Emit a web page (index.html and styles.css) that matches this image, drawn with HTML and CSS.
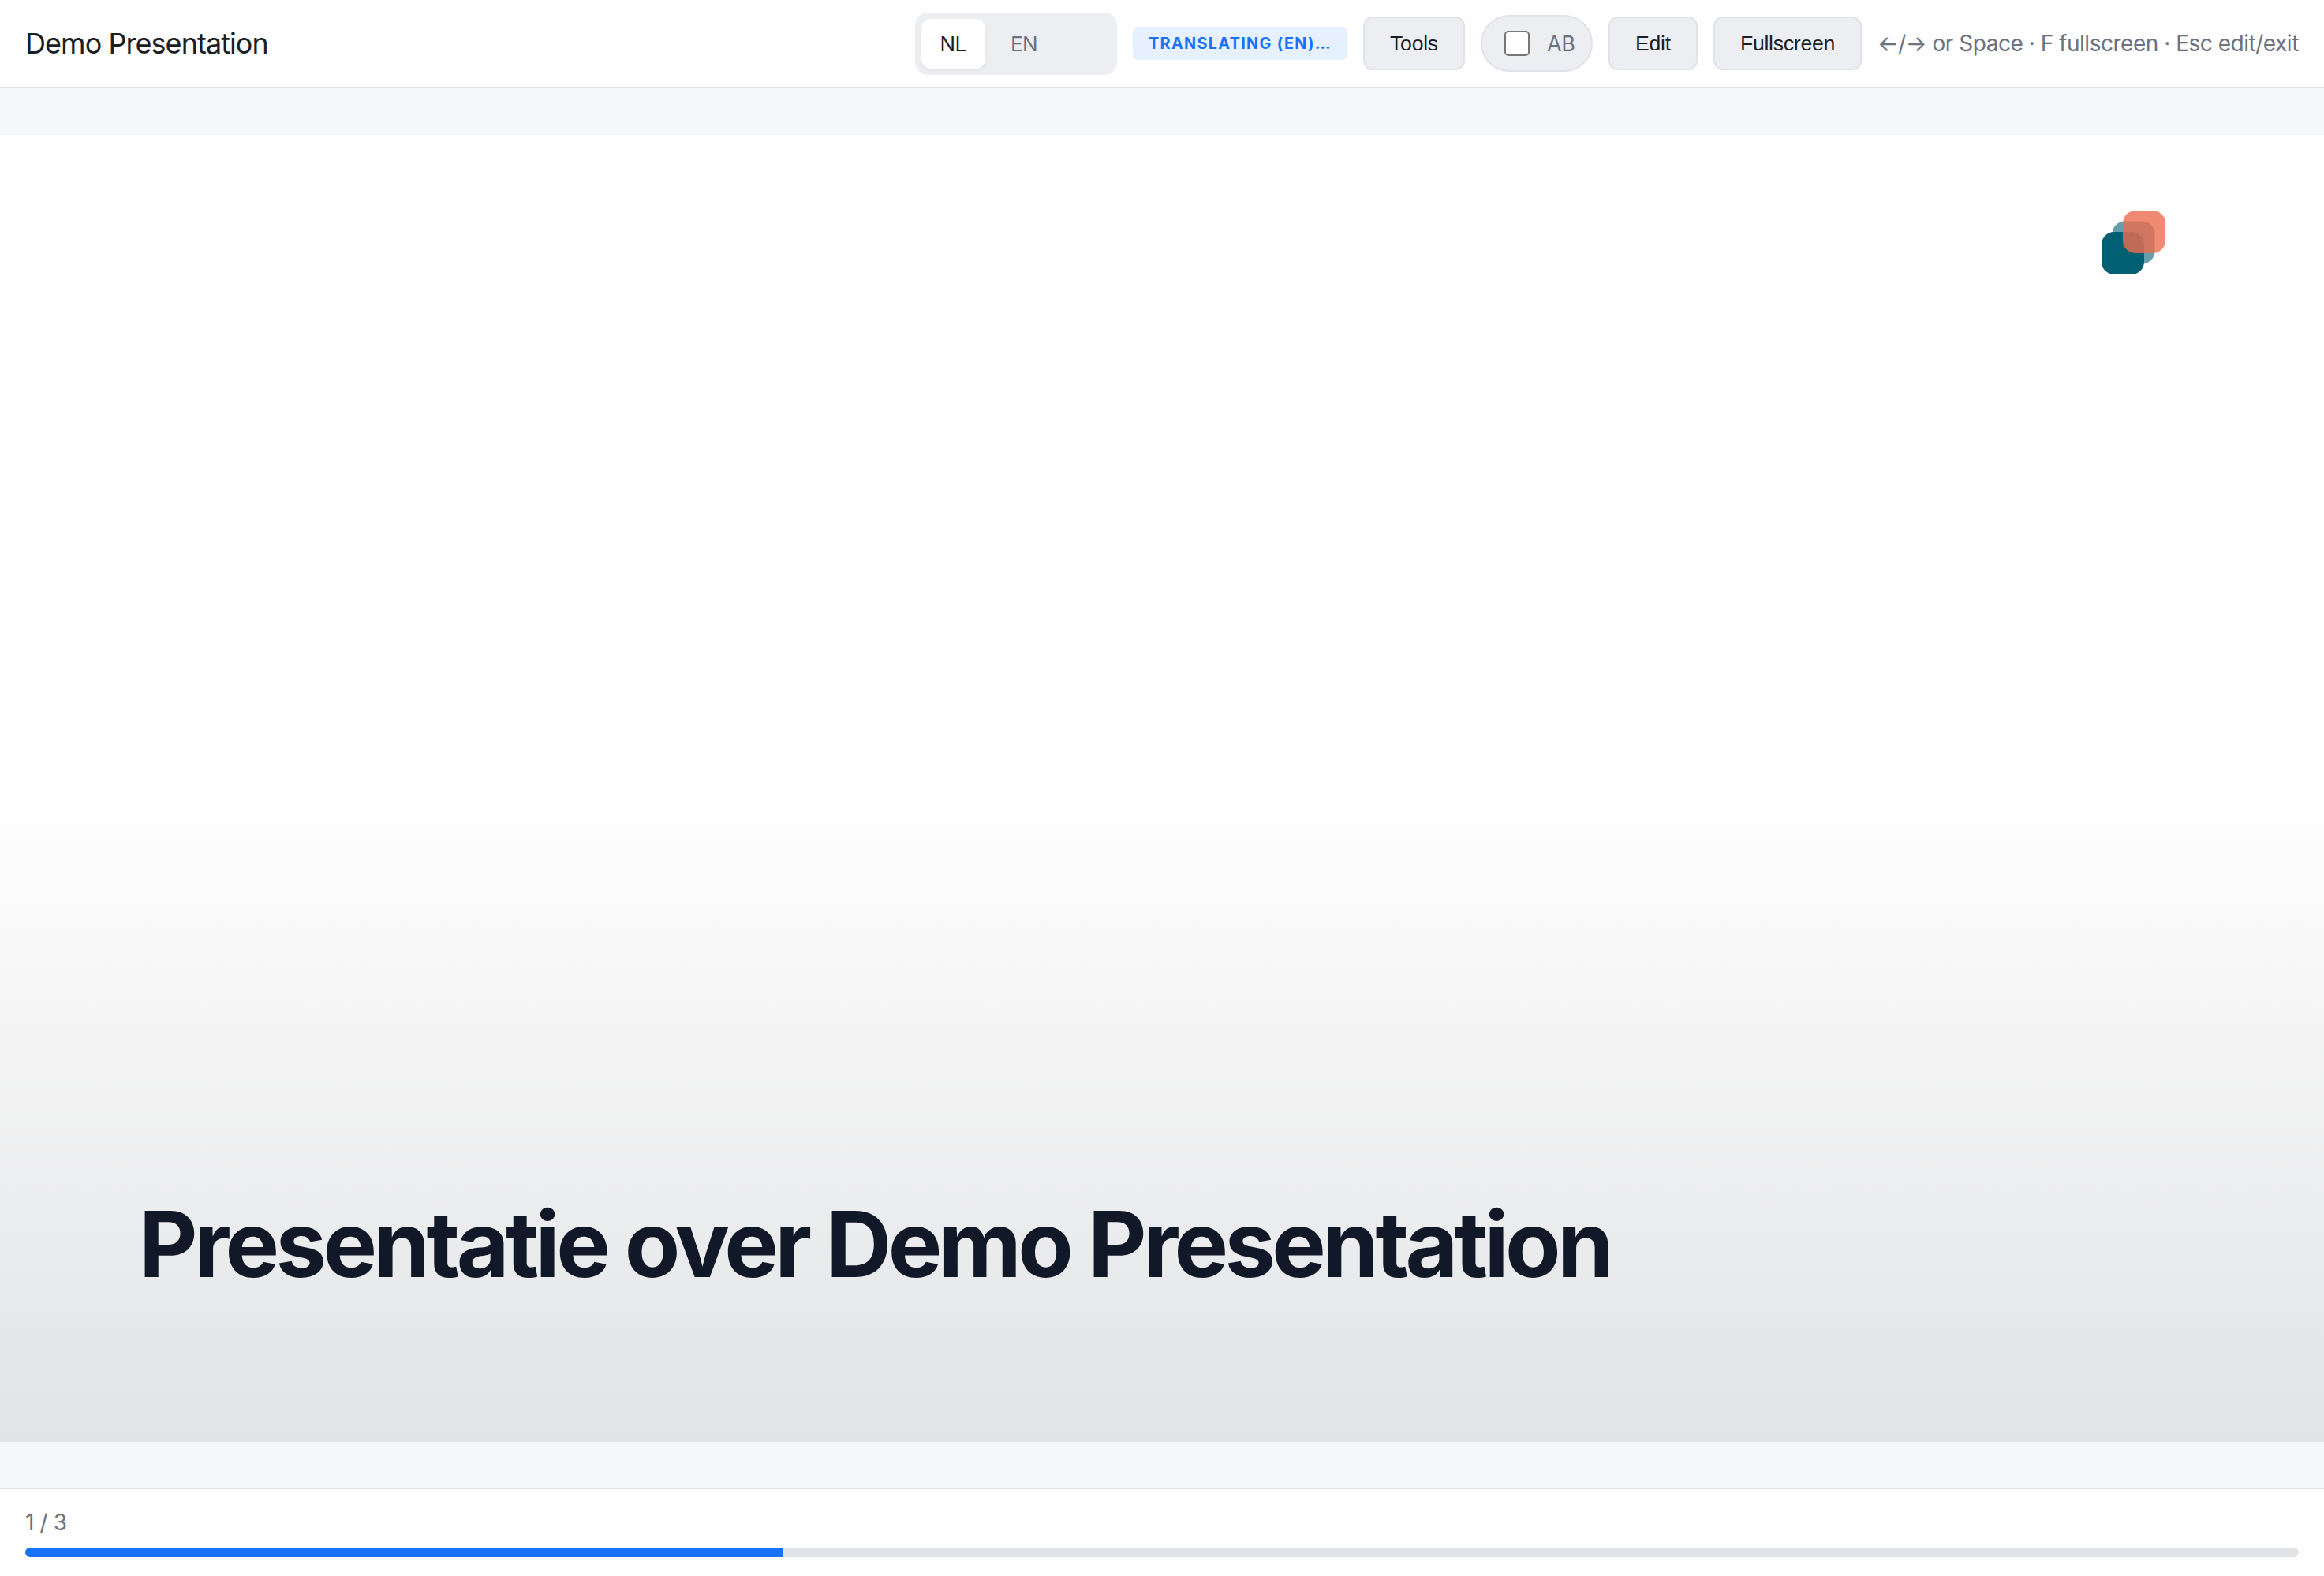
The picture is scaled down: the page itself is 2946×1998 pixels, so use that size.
FILE: index.html
```html
<!DOCTYPE html>
<html lang="nl">
<head>
<meta charset="utf-8">
<title>Demo Presentation</title>
<link rel="stylesheet" href="styles.css">
</head>
<body>
<header class="topbar">
  <div class="deck-name">Demo Presentation</div>
  <div class="controls">
    <div class="segmented"><div class="lang lang-active"><span>NL</span></div><div class="lang"><span>EN</span></div></div>
    <div class="status"><span>TRANSLATING (EN)…</span></div>
    <div class="button tools"><span>Tools</span></div>
    <div class="toggle"><span class="checkbox"></span><span class="toggle-label">AB</span></div>
    <div class="button edit"><span>Edit</span></div>
    <div class="button fullscreen"><span>Fullscreen</span></div>
    <div class="hint"><span>←/→ or Space · F fullscreen · Esc edit/exit</span></div>
  </div>
</header>
<main class="stage">
  <section class="slide">
    <svg class="logo" width="81" height="81" viewBox="0 0 81 81">
      <rect x="13.5" y="13.5" width="54" height="54" rx="16" fill="#005f73" fill-opacity=".6"/>
      <rect x="0" y="27" width="54" height="54" rx="16" fill="#005f73"/>
      <rect x="27" y="0" width="54" height="54" rx="16" fill="#ec6d4f" fill-opacity=".8"/>
    </svg>
    <h1 class="slide-title"><span>Presentatie over Demo Presentation</span></h1>
  </section>
</main>
<footer class="footer">
  <div class="counter"><span>1 / 3</span></div>
  <div class="progress"><div class="progress-fill" style="width:33.333%"></div></div>
</footer>
</body>
</html>
```
FILE: styles.css
```css
* { box-sizing: border-box; }
body {
  margin: 0;
  height: 1998px;
  display: flex;
  flex-direction: column;
  overflow: hidden;
  background: #f5f7f9;
  color: #1c1e24;
  font-family: Inter, "Liberation Sans", sans-serif;
  white-space: nowrap;
}
.topbar {
  height: 112px;
  padding: 0 32px;
  display: flex;
  align-items: center;
  justify-content: space-between;
  background: #fefefe;
  border-bottom: 2px solid #e2e3e9;
}
.deck-name { font-size: 36px; letter-spacing: -0.95px; }
.controls { display: flex; align-items: center; gap: 20px; }
.segmented {
  width: 256px;
  height: 79px;
  padding: 8px;
  display: flex;
  background: #edeef2;
  border-radius: 16px;
}
.lang {
  width: 81px;
  height: 63px;
  margin-right: 9px;
  padding-right: 1px;
  display: flex;
  align-items: center;
  justify-content: center;
  border-radius: 12px;
  color: #6b7280;
  font-size: 26px;
  letter-spacing: -0.6px;
}
.lang-active {
  background: #fff;
  color: #1c1e24;
  box-shadow: 0 2px 4px rgba(0, 0, 0, .06);
}
.status {
  width: 272px;
  height: 42px;
  padding-left: 20px;
  display: flex;
  align-items: center;
  background: #e6f0ff;
  border-radius: 7px;
  color: #1872f5;
  font-size: 19.8px;
  font-weight: 700;
  letter-spacing: 1.35px;
}
.button {
  height: 68px;
  display: flex;
  align-items: center;
  justify-content: center;
  background: #edeef2;
  border: 2px solid #e2e3e9;
  border-radius: 12px;
  font-family: "Liberation Sans", Arial, sans-serif;
  font-size: 26.6px;
  letter-spacing: -0.25px;
}
.tools { width: 129px; }
.edit { width: 113px; }
.fullscreen { width: 188px; }
.toggle {
  width: 142px;
  height: 72px;
  padding-left: 28px;
  display: flex;
  align-items: center;
  gap: 22px;
  background: #edeef2;
  border: 2px solid #e2e3e9;
  border-radius: 36px;
}
.checkbox {
  width: 32px;
  height: 32px;
  background: #fff;
  border: 2px solid #767676;
  border-radius: 5px;
}
.toggle-label { color: #6b7280; font-size: 27px; letter-spacing: -0.5px; }
.hint { width: 534px; color: #6b7280; font-size: 28px; letter-spacing: -0.48px; }
.stage { flex: 1; padding: 59px 0 58px; display: flex; }
.slide {
  flex: 1;
  padding: 96px 201px 187px 176px;
  display: flex;
  flex-direction: column;
  justify-content: space-between;
  background: linear-gradient(to top, rgba(17, 24, 39, .12), rgba(17, 24, 39, 0) 50%), #fff;
}
.logo { align-self: flex-end; }
.slide-title {
  margin: 0;
  color: #111827;
  font-size: 115.2px;
  line-height: 1.1;
  font-weight: 700;
  letter-spacing: -0.04em;
}
.footer {
  height: 112px;
  padding: 22px 32px 24px;
  display: flex;
  flex-direction: column;
  justify-content: space-between;
  background: #fefefe;
  border-top: 2px solid #e2e3e9;
}
.counter { color: #6b7280; font-size: 28px; line-height: 40px; letter-spacing: -0.4px; }
.progress {
  height: 12px;
  overflow: hidden;
  background: #e2e3e9;
  border-radius: 6px;
}
.progress-fill { height: 100%; background: #1872f5; }
```
